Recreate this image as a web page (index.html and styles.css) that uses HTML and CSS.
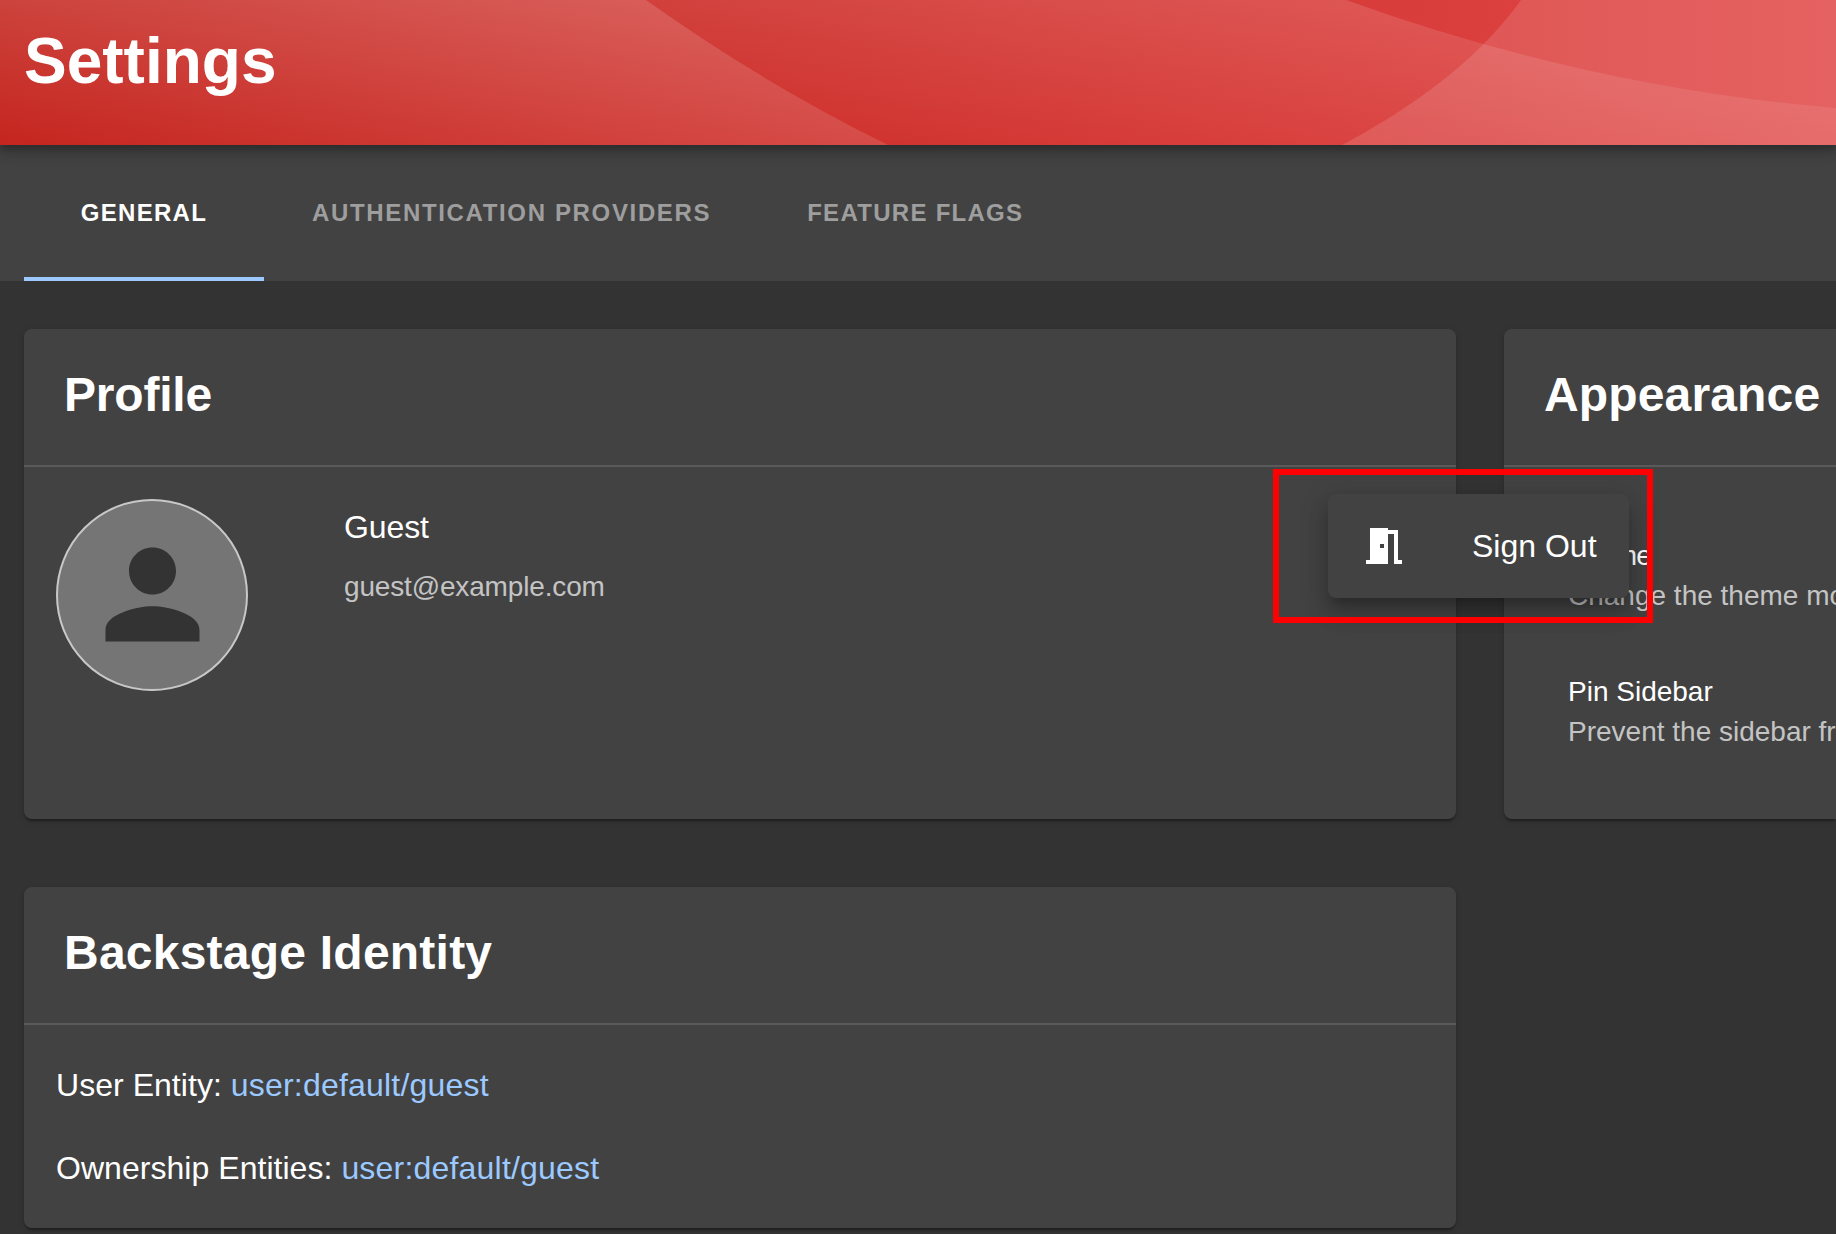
FILE: index.html
```html
<!DOCTYPE html>
<html lang="en">
<head>
<meta charset="utf-8">
<title>Settings</title>
<link rel="stylesheet" href="styles.css">
</head>
<body>
<header class="header">
  <svg class="header-art" viewBox="0 0 1836 145" preserveAspectRatio="none" aria-hidden="true">
    <defs>
      <linearGradient id="base" gradientUnits="userSpaceOnUse" x1="0" y1="0" x2="1836" y2="0">
        <stop offset="0" stop-color="#c4221b"/>
        <stop offset=".485" stop-color="#d13430"/>
        <stop offset=".784" stop-color="#da3e3c"/>
        <stop offset="1" stop-color="#e14b4a"/>
      </linearGradient>
      <linearGradient id="waveLeft" gradientUnits="userSpaceOnUse" x1="0" y1="145" x2="27.6" y2="-73">
        <stop offset="0" stop-color="#fff" stop-opacity=".015"/>
        <stop offset="1" stop-color="#fff" stop-opacity=".215"/>
      </linearGradient>
      <linearGradient id="waveMid" gradientUnits="userSpaceOnUse" x1="890" y1="144" x2="910" y2="-68">
        <stop offset="0" stop-color="#fff" stop-opacity="0"/>
        <stop offset="1" stop-color="#fff" stop-opacity=".15"/>
      </linearGradient>
    </defs>
    <rect width="1836" height="145" fill="url(#base)"/>
    <path d="M0 0H646Q764 84 888 145H0Z" fill="url(#waveLeft)"/>
    <path d="M646 0H1346Q1590 88 1836 108V145H888Q764 84 646 0Z" fill="url(#waveMid)"/>
    <path d="M1521 0Q1464 80 1342 145H1836V0Z" fill="#fff" fill-opacity=".13"/>
  </svg>
  <h1 class="header-title">Settings</h1>
</header>

<nav class="tabs">
  <a class="tab tab-active">GENERAL</a>
  <a class="tab tab-wide">AUTHENTICATION PROVIDERS</a>
  <a class="tab">FEATURE FLAGS</a>
</nav>

<main class="content">
  <section class="card profile">
    <h2 class="card-title">Profile</h2>
    <div class="profile-body">
      <div class="avatar">
        <svg viewBox="0 0 24 24" aria-hidden="true"><path d="M12 12c2.21 0 4-1.79 4-4s-1.79-4-4-4-4 1.79-4 4 1.79 4 4 4zm0 2c-2.67 0-8 1.34-8 4v2h16v-2c0-2.66-5.33-4-8-4z"/></svg>
      </div>
      <div class="profile-text">
        <div class="profile-name">Guest</div>
        <div class="profile-email">guest@example.com</div>
      </div>
    </div>
  </section>

  <section class="card appearance">
    <h2 class="card-title">Appearance</h2>
    <ul class="options">
      <li class="option">
        <div class="option-name option-name-tight">Theme</div>
        <div class="option-hint">Change the theme mode</div>
      </li>
      <li class="option">
        <div class="option-name">Pin Sidebar</div>
        <div class="option-hint">Prevent the sidebar from collapsing</div>
      </li>
    </ul>
  </section>

  <section class="card identity">
    <h2 class="card-title">Backstage Identity</h2>
    <div class="identity-body">
      <div>User Entity: <a class="link">user:default/guest</a></div>
      <div>Ownership Entities: <a class="link">user:default/guest</a></div>
    </div>
  </section>
</main>

<div class="menu">
  <svg class="menu-icon" viewBox="0 0 24 24" aria-hidden="true"><path d="M14 6v15H3v-2h2V3h9v1h5v15h2v2h-4V6h-3zm-4 5v2h2v-2h-2z"/></svg>
  <span>Sign Out</span>
</div>
<div class="highlight"></div>
</body>
</html>
```

FILE: styles.css
```css
* {
  box-sizing: border-box;
}

html {
  overflow: hidden;
}

body {
  margin: 0;
  width: 1836px;
  height: 1234px;
  overflow: hidden;
  position: relative;
  background: #333;
  color: #fff;
  font-family: "Liberation Sans", Arial, sans-serif;
}

.header {
  position: relative;
  z-index: 1;
  height: 145px;
  padding: 29px 24px 0;
  box-shadow: 0 2px 8px 0 rgba(0, 0, 0, .2), 0 8px 10px 0 rgba(0, 0, 0, .14), 0 2px 20px 0 rgba(0, 0, 0, .12);
}

.header-art {
  position: absolute;
  inset: 0;
  width: 100%;
  height: 100%;
}

.header-title {
  position: relative;
  margin: 0;
  font-size: 64px;
  line-height: 64px;
}

.tabs {
  display: flex;
  height: 136px;
  padding-left: 24px;
  background: #424242;
}

.tab {
  display: flex;
  align-items: center;
  justify-content: center;
  min-width: 240px;
  padding: 4px 48px 0;
  border-bottom: 4px solid transparent;
  color: #9e9e9e;
  font-size: 24px;
  font-weight: 700;
  line-height: 24px;
  letter-spacing: 1.28px;
  white-space: nowrap;
}

.tab-wide {
  letter-spacing: 1.65px;
}

.tab-active {
  color: #fff;
  border-bottom-color: #9cc9ff;
}

.content {
  display: grid;
  grid-template-columns: 1432px 1fr;
  grid-template-rows: 490px 341px;
  gap: 68px 48px;
  padding: 48px 0 0 24px;
}

.card {
  min-width: 0;
  border-radius: 8px;
  background: #424242;
  box-shadow: 0 4px 2px -2px rgba(0, 0, 0, .2), 0 2px 2px 0 rgba(0, 0, 0, .14), 0 2px 6px 0 rgba(0, 0, 0, .12);
}

.appearance {
  overflow: hidden;
  border-radius: 8px 0 0 8px;
}

.card-title {
  height: 138px;
  margin: 0;
  padding: 42px 40px 0;
  border-bottom: 2px solid #5a5a5a;
  font-size: 48px;
  line-height: 48px;
  white-space: nowrap;
}

.profile .card-title {
  letter-spacing: -.2px;
}

.appearance .card-title {
  letter-spacing: .15px;
}

.identity .card-title {
  letter-spacing: .23px;
}

.profile-body {
  display: flex;
  gap: 96px;
  padding: 32px;
}

.avatar {
  display: flex;
  align-items: center;
  justify-content: center;
  width: 192px;
  height: 192px;
  padding-bottom: 2px;
  border: 2px solid #c8c8c8;
  border-radius: 50%;
  background: #757575;
}

.avatar svg {
  width: 141px;
  height: 141px;
  fill: #333;
}

.profile-text {
  display: flex;
  flex-direction: column;
  gap: 30px;
  padding-top: 12px;
}

.profile-name {
  font-size: 32px;
  line-height: 32px;
  letter-spacing: -.1px;
}

.profile-email {
  color: #c4c4c4;
  font-size: 28px;
  line-height: 28px;
  letter-spacing: -.16px;
}

.options {
  display: flex;
  flex-direction: column;
  gap: 56px;
  margin: 0;
  padding: 69px 0 0 64px;
  list-style: none;
  font-size: 28px;
  line-height: 40px;
  white-space: nowrap;
}

.option-name-tight {
  letter-spacing: -.8px;
}

.option-hint {
  color: #c4c4c4;
}

.identity-body {
  display: flex;
  flex-direction: column;
  gap: 43px;
  padding: 40px 32px;
  font-size: 32px;
  line-height: 40px;
  letter-spacing: .04px;
}

.link {
  color: #9cc9ff;
  letter-spacing: .2px;
}

.menu {
  position: absolute;
  z-index: 2;
  left: 1328px;
  top: 494px;
  display: flex;
  align-items: center;
  gap: 64px;
  width: 301px;
  height: 104px;
  padding: 0 32px;
  border-radius: 8px;
  background: #424242;
  box-shadow: 0 10px 10px -6px rgba(0, 0, 0, .2), 0 16px 20px 2px rgba(0, 0, 0, .14), 0 6px 28px 4px rgba(0, 0, 0, .12);
  font-size: 32px;
  line-height: 32px;
  white-space: nowrap;
}

.menu-icon {
  width: 48px;
  height: 48px;
  fill: #fff;
}

.highlight {
  position: absolute;
  z-index: 3;
  left: 1273px;
  top: 469px;
  width: 380px;
  height: 154px;
  border: 6px solid #f00;
}
```
